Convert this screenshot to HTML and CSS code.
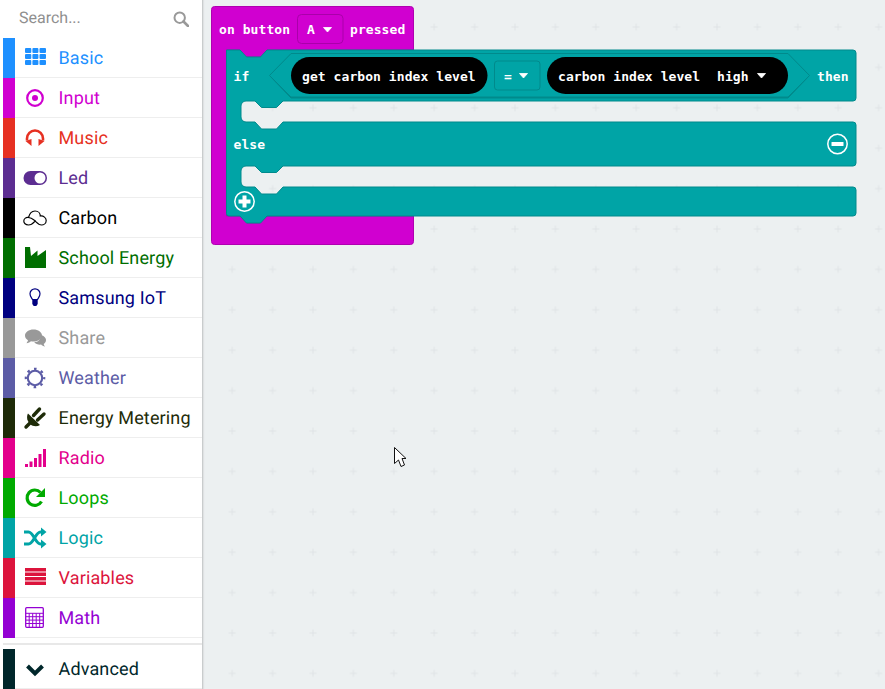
FILE: index.html
```html
<!DOCTYPE html>
<html lang="en">
<head>
    <meta charset="UTF-8">
    <title>Blocks editor</title>
    <link rel="stylesheet" href="styles.css">
</head>
<body>
<div class="page">
    <div class="sidebar">
        <div class="search">
            <span class="search-text">Search...</span>
            <svg class="search-icon" width="16" height="16" viewBox="0 0 16 16"><circle cx="6.7" cy="6.7" r="5.2" fill="none" stroke="#999" stroke-width="2"/><path d="M10.5 10.5L15 15" stroke="#999" stroke-width="2.6" stroke-linecap="round"/></svg>
        </div>
        <div class="cat basic">
            <i class="bar"></i>
            <div class="cat-body">
                <svg class="icon" viewBox="0 0 24 24"><g fill="currentColor"><rect x="2" y="2" width="6.300" height="5" rx="1"/><rect x="9.400" y="2" width="6" height="5" rx="1"/><rect x="16.500" y="2" width="6.500" height="5" rx="1"/><rect x="2" y="8" width="6.300" height="5" rx="1"/><rect x="9.400" y="8" width="6" height="5" rx="1"/><rect x="16.500" y="8" width="6.500" height="5" rx="1"/><rect x="2" y="14" width="6.300" height="5" rx="1"/><rect x="9.400" y="14" width="6" height="5" rx="1"/><rect x="16.500" y="14" width="6.500" height="5" rx="1"/></g></svg>
                <span class="label">Basic</span>
            </div>
        </div>
        <div class="cat input">
            <i class="bar"></i>
            <div class="cat-body">
                <svg class="icon" viewBox="0 0 24 24"><circle cx="12" cy="12" r="7.8" fill="none" stroke="currentColor" stroke-width="2.200"/><circle cx="12" cy="12" r="3" fill="currentColor"/></svg>
                <span class="label">Input</span>
            </div>
        </div>
        <div class="cat music">
            <i class="bar"></i>
            <div class="cat-body">
                <svg class="icon" viewBox="0 0 24 24"><path d="M4 14.500v-2a8 8 0 0 1 16 0v2" fill="none" stroke="currentColor" stroke-width="2.600"/><path fill="currentColor" d="M2.500 15l6-2v7zM21.500 15l-6-2v7z"/></svg>
                <span class="label">Music</span>
            </div>
        </div>
        <div class="cat led">
            <i class="bar"></i>
            <div class="cat-body">
                <svg class="icon" viewBox="0 0 24 24"><rect x="0.500" y="5" width="23.500" height="14" rx="7" fill="currentColor"/><circle cx="17" cy="12" r="5.500" fill="#fff"/></svg>
                <span class="label">Led</span>
            </div>
        </div>
        <div class="cat carbon">
            <i class="bar"></i>
            <div class="cat-body">
                <svg class="icon" viewBox="0 0 24 24"><path fill="none" stroke="currentColor" stroke-width="1.200" d="M5.500 19C2.500 19 .8 17 .8 15c0-2.500 2.500-4 4.700-3.500C6.500 7.500 9 5 12 5c3.500 0 5.300 2.500 5.300 5 3.200-.5 5.900 2 5.900 4.500 0 3-2.600 4.500-4.700 4.500-3.500 0-5.500-3.500-7.500-5-1.700-1.300-3.500-2.200-5.500-2.500M5.500 19c3.500 0 5.500-2.800 7.200-4.500"/></svg>
                <span class="label">Carbon</span>
            </div>
        </div>
        <div class="cat school">
            <i class="bar"></i>
            <div class="cat-body">
                <svg class="icon" viewBox="0 0 24 24"><path fill="currentColor" d="M2 1h5l1 9 6.500-5.500V10L23 4v18H2z"/></svg>
                <span class="label">School Energy</span>
            </div>
        </div>
        <div class="cat samsung">
            <i class="bar"></i>
            <div class="cat-body">
                <svg class="icon" viewBox="0 0 24 24"><path fill="none" stroke="currentColor" stroke-width="1.200" d="M9.500 13.500C8.500 11.500 7 10.500 7 7.800a5 5 0 0 1 10 0c0 2.700-1.500 3.700-2.500 5.700z"/><path fill="currentColor" d="M9.300 14h5.400v4l-1.400 2h-2.600l-1.400-2z"/></svg>
                <span class="label">Samsung IoT</span>
            </div>
        </div>
        <div class="cat share">
            <i class="bar"></i>
            <div class="cat-body">
                <svg class="icon" viewBox="0 0 24 24"><path fill="currentColor" d="M17 9c3.500.3 6 2.500 6 5 0 1.600-.9 3-2.300 3.900.2 1 .8 2 1.300 2.600-1.600-.2-3-1-3.900-1.900-2.800.3-5.500-.7-6.900-2.400 3.500 0 7.500-2.500 5.800-7.200z"/><path fill="currentColor" d="M10.500 3.500c4.700 0 8.500 2.700 8.500 6s-3.800 6-8.500 6c-.9 0-1.800-.1-2.600-.3-1 1-2.500 1.800-4.400 2 .6-.7 1.300-1.800 1.500-2.900C3.100 13.200 2 11.500 2 9.500c0-3.300 3.800-6 8.500-6z"/></svg>
                <span class="label">Share</span>
            </div>
        </div>
        <div class="cat weather">
            <i class="bar"></i>
            <div class="cat-body">
                <svg class="icon" viewBox="0 0 24 24"><circle cx="12" cy="12" r="7.200" fill="none" stroke="currentColor" stroke-width="2.100"/><circle cx="12" cy="12" r="9.200" fill="none" stroke="currentColor" stroke-width="2.200" stroke-dasharray="2.600 4.626" stroke-dashoffset="1.300"/></svg>
                <span class="label">Weather</span>
            </div>
        </div>
        <div class="cat metering">
            <i class="bar"></i>
            <div class="cat-body">
                <svg class="icon" viewBox="0 0 24 24"><path fill="currentColor" d="M5 7.500L17 19c-3 2-7.500 1.500-10-1-2.500-2.500-4-7-2-10.500z"/><path d="M3 21l4.500-4.500M10.500 9.500l6-6.500M14.500 14l6.500-6" stroke="currentColor" stroke-width="3.400" stroke-linecap="round" fill="none"/></svg>
                <span class="label">Energy Metering</span>
            </div>
        </div>
        <div class="cat radio">
            <i class="bar"></i>
            <div class="cat-body">
                <svg class="icon" viewBox="0 0 24 24"><path fill="currentColor" d="M2 18h3v3H2zM6.500 15.500h3V21h-3zM11 12h3v9h-3zM15.500 8h3v13h-3zM20 3h3v18h-3z"/></svg>
                <span class="label">Radio</span>
            </div>
        </div>
        <div class="cat loops">
            <i class="bar"></i>
            <div class="cat-body">
                <svg class="icon" viewBox="0 0 24 24"><path fill="none" stroke="currentColor" stroke-width="3.200" d="M18.500 15.500a7.700 7.700 0 1 1-1-9"/><path fill="currentColor" d="M22 2v9h-9z"/></svg>
                <span class="label">Loops</span>
            </div>
        </div>
        <div class="cat logic">
            <i class="bar"></i>
            <div class="cat-body">
                <svg class="icon" viewBox="0 0 24 24"><path fill="none" stroke="currentColor" stroke-width="3" d="M1 6h4.500c5 0 7 12 12 12H20M1 18h4.500c5 0 7-12 12-12H20"/><path fill="currentColor" d="M18 1.500L23.500 6 18 10.500zM18 13.500l5.500 4.500-5.500 4.500z"/></svg>
                <span class="label">Logic</span>
            </div>
        </div>
        <div class="cat variables">
            <i class="bar"></i>
            <div class="cat-body">
                <svg class="icon" viewBox="0 0 24 24"><path fill="currentColor" d="M2 2h21v3.500H2zM2 6.500h21V10H2zM2 11h21v3.500H2zM2 15.500h21V19H2z"/></svg>
                <span class="label">Variables</span>
            </div>
        </div>
        <div class="cat math">
            <i class="bar"></i>
            <div class="cat-body">
                <svg class="icon" viewBox="0 0 24 24"><rect x="2.700" y="1.700" width="17.600" height="19.600" rx="1" fill="none" stroke="currentColor" stroke-width="1.300"/><path d="M3 7.300h17M3 10.700h17M3 14.100h17M3 17.500h17M6.200 7.300v14M9.700 7.300v14M13.200 7.300v14M16.700 7.300v14" fill="none" stroke="currentColor" stroke-width="1"/></svg>
                <span class="label">Math</span>
            </div>
        </div>
        <div class="divider"></div>
        <div class="cat advanced">
            <i class="bar"></i>
            <div class="cat-body">
                <svg class="icon" viewBox="0 0 24 24"><path d="M4.500 9L12 16.500 19.500 9" fill="none" stroke="currentColor" stroke-width="4"/></svg>
                <span class="label">Advanced</span>
            </div>
        </div>
    </div>
    <div class="workspace">
        <svg class="canvas" viewBox="203 0 682 689">
            <defs>
                <pattern id="grid" x="393.800" y="27" width="40.400" height="40.400" patternUnits="userSpaceOnUse">
                    <path d="M-3.500 0h7M0-3.500v7M36.900 0h7M40.400-3.500v7M-3.500 40.400h7M0 36.900v7M36.900 40.400h7M40.400 36.900v7" stroke="#dfe3e6" stroke-width="1" fill="none"/>
                </pattern>
            </defs>
            <rect x="203" y="0" width="682" height="689" fill="url(#grid)"/>

            <!-- on button pressed -->
            <path class="hat" d="M214.500 6.500H410.500a3 3 0 0 1 3 3V50H267L260.500 57H246.500L240 50H226.500V216H240L246.500 223H260.500L267 216H413.500V241.500a3 3 0 0 1-3 3H214.500a3 3 0 0 1-3-3V9.500a3 3 0 0 1 3-3z"/>
            <text class="txt" x="219" y="34">on button</text>
            <rect class="hat-drop" x="297.500" y="14.500" width="45.500" height="29" rx="4"/>
            <text class="txt" x="307" y="34">A</text>
            <path class="caret" d="M323.500 27.500h8l-4 4.500z"/>
            <text class="txt" x="350" y="34">pressed</text>

            <!-- if / else -->
            <path class="logic-block" d="M226.500 50H240L246.500 57H260.500L267 50H853a3 3 0 0 1 3 3V98a3 3 0 0 1-3 3H283L276.500 107.500H261.500L255 101H246a5 5 0 0 0-5 5V117a5 5 0 0 0 5 5H255L261.500 129H276.500L283 122H853a3 3 0 0 1 3 3V163a3 3 0 0 1-3 3H283L276.500 172.500H261.500L255 166H246a5 5 0 0 0-5 5V182a5 5 0 0 0 5 5H255L261.500 194H276.500L283 187H853a3 3 0 0 1 3 3V213a3 3 0 0 1-3 3H267L260.500 223H246.500L240 216H229a2.500 2.500 0 0 1-2.500-2.500z"/>
            <text class="txt" x="233.500" y="81">if</text>
            <path class="hex-shade" d="M291 54H788L809 76 788 98H291L270 76z"/>
            <path class="hex" d="M291 53.500H788L809.500 75.500 788 97H291L269.500 75.500z"/>
            <rect class="pill" x="291" y="57" width="196.500" height="37" rx="18.500"/>
            <text class="txt" x="302" y="81">get carbon index level</text>
            <rect class="logic-drop" x="494.500" y="61" width="45.500" height="29" rx="3"/>
            <text class="txt" x="504" y="81">=</text>
            <path class="caret" d="M519.500 73.500h8l-4 4.500z"/>
            <rect class="pill" x="547" y="57" width="241" height="37" rx="18.500"/>
            <text class="txt" x="558" y="81">carbon index level</text>
            <text class="txt" x="717" y="81">high</text>
            <path class="caret" d="M757.500 73.500h8l-4 4.500z"/>
            <text class="txt" x="817" y="81">then</text>
            <text class="txt" x="233.500" y="149">else</text>
            <circle class="ring" cx="837.500" cy="144" r="9.700"/>
            <path class="glyph" d="M832 142h11a.5.5 0 0 1 .5.5v3a.5.5 0 0 1-.5.5h-11a.5.5 0 0 1-.5-.5v-3a.5.5 0 0 1 .5-.5z"/>
            <circle class="ring" cx="244.500" cy="201.500" r="9.700"/>
            <path class="glyph" d="M242.500 195.500h4v4h4v4h-4v4h-4v-4h-4v-4h4z"/>

            <!-- mouse pointer -->
            <path class="pointer" d="M394.500 447.500V463.500L398.500 460L401 466.500L404.500 465L402 458.500L406 458.500z"/>
        </svg>
    </div>
</div>
</body>
</html>
```

FILE: styles.css
```css
* {
    margin: 0;
    padding: 0;
    box-sizing: border-box;
}

html, body {
    height: 100%;
    overflow: hidden;
}

body {
    font-family: Roboto, "Liberation Sans", sans-serif;
}

.page {
    display: flex;
    height: 100%;
}

.sidebar {
    width: 203px;
    flex-shrink: 0;
    padding-left: 3px;
    background: #fff;
    border-right: 1px solid #c9cccd;
    box-shadow: 1px 0 1px #dfe2e3;
    position: relative;
}

.search {
    height: 38px;
    display: flex;
    align-items: center;
    justify-content: space-between;
    padding: 0 13px 4px 16px;
}

.search-text {
    font-size: 16px;
    color: #8f8f8f;
    text-rendering: geometricPrecision;
}

.search-icon {
    margin-top: 3px;
}

.cat {
    display: flex;
    height: 40px;
}

.bar {
    width: 12px;
    background: currentColor;
}

.cat-body {
    flex: 1;
    display: flex;
    align-items: center;
    border-bottom: 1px solid #eee;
}

.icon {
    width: 24px;
    height: 24px;
    margin-left: 8px;
    margin-right: 11.5px;
    flex-shrink: 0;
}

.label {
    font-size: 18px;
    padding-top: 2px;
    white-space: nowrap;
    text-rendering: geometricPrecision;
    letter-spacing: 0.15px;
}

.basic { color: #1e90ff; }
.input { color: #d000d0; }
.music { color: #e63022; }
.led { color: #5c2d91; }
.carbon { color: #000; }
.school { color: #006e00; }
.samsung { color: #000080; }
.share { color: #999; }
.weather { color: #5c5ca6; }
.metering { color: #1e2b08; }
.radio { color: #e3008c; }
.loops { color: #00aa00; }
.logic { color: #00a4a6; }
.variables { color: #dc143c; }
.math { color: #9400d3; }
.advanced { color: #00272b; }

.divider {
    margin-top: 5px;
    margin-bottom: 4px;
    height: 2px;
    background: #e8e8e8;
}

.workspace {
    flex: 1;
    background: #ecf0f1;
}

.canvas {
    display: block;
    width: 100%;
    height: 100%;
}

.txt {
    font-family: "DejaVu Sans Mono", "Liberation Mono", monospace;
    font-weight: bold;
    font-size: 13px;
    letter-spacing: 0.07px;
    fill: #fff;
}

.hat {
    fill: #d000d0;
    stroke: #b000b0;
    stroke-width: 1;
}

.hat-drop {
    fill: #d000d0;
    stroke: #aa00aa;
}

.logic-block {
    fill: #00a4a6;
    stroke: #008a8c;
    stroke-width: 1;
}

.hex {
    fill: #00a4a6;
    stroke: #008a8c;
}

.hex-shade {
    fill: #008a8c;
    stroke: #008a8c;
}

.logic-drop {
    fill: #00a4a6;
    stroke: #008a8c;
}

.pill {
    fill: #000;
}

.caret {
    fill: #fff;
    stroke: #fff;
    stroke-width: 0.8;
    stroke-linejoin: round;
}

.ring {
    fill: none;
    stroke: #fff;
    stroke-width: 1.500;
}

.glyph {
    fill: #fff;
}

.pointer {
    fill: #fff;
    stroke: #111;
    stroke-width: 1;
}
```
